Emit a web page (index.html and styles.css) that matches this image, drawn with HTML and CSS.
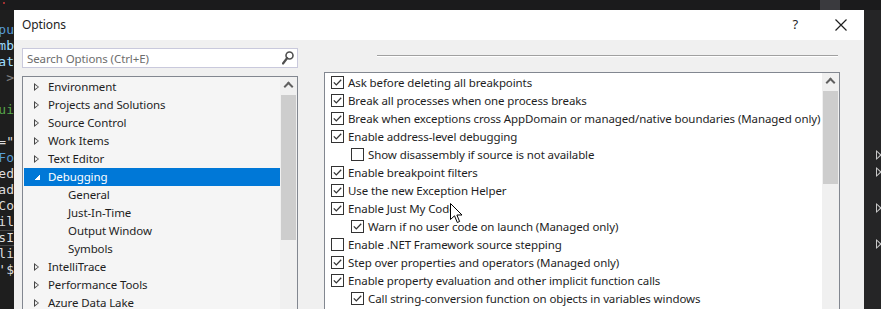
FILE: index.html
```html
<!DOCTYPE html>
<html lang="en">
<head>
    <meta charset="UTF-8">
    <title>Options</title>
    <link rel="stylesheet" href="styles.css">
</head>
<body>
<div class="screen">
    <!-- editor tab strip -->
    <div class="topbar">
        <span class="tab-mark"></span>
        <span class="tab-box"></span>
    </div>

    <div class="main">
        <!-- code editor behind the dialog -->
        <div class="code">
            <div class="ln kw">pu</div>
            <div class="ln id">mb</div>
            <div class="ln id">at</div>
            <div class="ln op">&gt;</div>
            <div class="ln"></div>
            <div class="ln cm">ui</div>
            <div class="ln"></div>
            <div class="ln tx">="</div>
            <div class="ln kw">Fo</div>
            <div class="ln tx">ed</div>
            <div class="ln tx">ad</div>
            <div class="ln tx">Co</div>
            <div class="ln tx">il</div>
            <div class="ln tx cur">sI</div>
            <div class="ln tx">li</div>
            <div class="ln tx">'$</div>
        </div>

        <!-- Options dialog -->
        <div class="dialog">
            <div class="titlebar">
                <span class="title">Options</span>
                <span class="help">?</span>
                <svg class="close" width="12" height="12" viewBox="0 0 12 12">
                    <path d="M0.5 0.5 L11.5 11.5 M11.5 0.5 L0.5 11.5" stroke="#1e1e1e" stroke-width="1.2" fill="none"/>
                </svg>
            </div>

            <div class="dialog-body">
                <div class="nav">
                    <div class="search">
                        <span class="search-text">Search Options (Ctrl+E)</span>
                        <svg class="search-icon" width="12" height="14" viewBox="0 0 12 14">
                            <circle cx="7.5" cy="4.5" r="3.5" stroke="#505050" stroke-width="1.6" fill="none"/>
                            <path d="M5.2 7 L1 12.5" stroke="#505050" stroke-width="2.2" stroke-linecap="round"/>
                        </svg>
                    </div>

                    <div class="tree">
                        <ul class="tree-items">
                            <li class="node"><span class="exp"></span>Environment</li>
                            <li class="node"><span class="exp"></span>Projects and Solutions</li>
                            <li class="node"><span class="exp"></span>Source Control</li>
                            <li class="node"><span class="exp"></span>Work Items</li>
                            <li class="node"><span class="exp"></span>Text Editor</li>
                            <li class="node selected"><span class="exp open"></span>Debugging</li>
                            <li class="leaf">General</li>
                            <li class="leaf">Just-In-Time</li>
                            <li class="leaf">Output Window</li>
                            <li class="leaf">Symbols</li>
                            <li class="node"><span class="exp"></span>IntelliTrace</li>
                            <li class="node"><span class="exp"></span>Performance Tools</li>
                            <li class="node"><span class="exp"></span>Azure Data Lake</li>
                        </ul>
                        <div class="vscroll">
                            <div class="arrow-up"></div>
                            <div class="thumb tree-thumb"></div>
                        </div>
                    </div>
                </div>

                <div class="page">
                    <div class="page-head">
                        <span class="page-title"></span>
                        <div class="rule"></div>
                    </div>

                    <div class="opts">
                        <ul class="opt-list">
                            <li class="opt on">Ask before deleting all breakpoints</li>
                            <li class="opt on">Break all processes when one process breaks</li>
                            <li class="opt on">Break when exceptions cross AppDomain or managed/native boundaries (Managed only)</li>
                            <li class="opt on">Enable address-level debugging</li>
                            <li class="opt sub">Show disassembly if source is not available</li>
                            <li class="opt on">Enable breakpoint filters</li>
                            <li class="opt on">Use the new Exception Helper</li>
                            <li class="opt on">Enable Just My Code</li>
                            <li class="opt on sub">Warn if no user code on launch (Managed only)</li>
                            <li class="opt">Enable .NET Framework source stepping</li>
                            <li class="opt on">Step over properties and operators (Managed only)</li>
                            <li class="opt on">Enable property evaluation and other implicit function calls</li>
                            <li class="opt on sub">Call string-conversion function on objects in variables windows</li>
                        </ul>
                        <div class="vscroll">
                            <div class="arrow-up"></div>
                            <div class="thumb opt-thumb"></div>
                        </div>
                    </div>
                </div>
            </div>
        </div>

        <!-- solution explorer edge -->
        <div class="side">
            <span class="side-arrow a1"></span>
            <span class="side-arrow a2"></span>
            <span class="side-arrow a3"></span>
            <span class="side-arrow a4"></span>
        </div>
    </div>

    <!-- mouse pointer -->
    <svg class="pointer" width="13" height="21" viewBox="0 0 13 21">
        <path d="M0.5 0.5 L0.5 16.5 L4.5 12.8 L7.3 19.5 L9.6 18.5 L6.9 12 L12 12 Z" fill="#ffffff" stroke="#000000" stroke-width="1"/>
    </svg>
</div>
</body>
</html>
```

FILE: styles.css
```css
body {
    margin: 0;
    padding: 0;
    background-color: #1e1e1e;
    font-family: "Noto Sans", "Open Sans", sans-serif;
    font-size: 11.5px;
    letter-spacing: -0.1px;
    color: #1e1e1e;
}

.screen {
    position: relative;
    width: 881px;
    height: 309px;
    overflow: hidden;
}

.topbar {
    height: 10px;
    background-color: #1b1b1c;
    display: flex;
}

.tab-mark {
    width: 2px;
    height: 2px;
    margin: 2px 0 0 3px;
    background-color: #a03030;
}

.tab-box {
    width: 20px;
    height: 10px;
    margin-left: 815px;
    background-color: #3a3a3e;
}

.main {
    display: flex;
    height: 299px;
}

/* ---------- code behind ---------- */

.code {
    width: 14px;
    flex-shrink: 0;
    padding-top: 12px;
    overflow: hidden;
    background-color: #1e1e1e;
    font-family: "DejaVu Sans Mono", monospace;
    font-size: 13px;
    letter-spacing: 0;
}

.ln {
    height: 16px;
    line-height: 16px;
    display: flex;
    justify-content: flex-end;
    white-space: nowrap;
}

.kw { color: #569cd6; }
.id { color: #9cdcfe; }
.op { color: #808080; }
.cm { color: #57a64a; }
.tx { color: #dcdcdc; }

.cur {
    background-color: #1e1e1e;
    border-top: 1px solid #464646;
    border-bottom: 1px solid #464646;
    height: 14px;
    line-height: 14px;
}

/* ---------- dialog ---------- */

.dialog {
    width: 850px;
    flex-shrink: 0;
    background-color: #f0f0f0;
    display: flex;
    flex-direction: column;
    overflow: hidden;
}

.titlebar {
    height: 30px;
    flex-shrink: 0;
    background-color: #ffffff;
    display: flex;
    align-items: center;
    padding-left: 8px;
}

.title {
    flex: 1;
    font-size: 12px;
    padding-bottom: 1px;
}

.help {
    font-size: 13px;
    margin-right: 37px;
    padding-bottom: 2px;
}

.close {
    margin-right: 17px;
    margin-bottom: 1px;
}

.dialog-body {
    display: flex;
    flex-shrink: 0;
    padding: 8px 0 0 8px;
}

.nav {
    width: 276px;
    flex-shrink: 0;
    margin-right: 26px;
}

.search {
    height: 18px;
    border: 1px solid #c9c9dc;
    background-color: #ffffff;
    display: flex;
    align-items: center;
    padding: 0 3px 0 4px;
}

.search-text {
    flex: 1;
    color: #6d6d6d;
}

.tree {
    margin-top: 8px;
    height: 240px;
    border: 1px solid #828790;
    background-color: #f5f5f5;
    display: flex;
}

.tree-items {
    list-style: none;
    margin: 0;
    padding: 1px 0 0 1px;
    flex: 1;
    min-width: 0;
}

.tree-items li {
    height: 18px;
    line-height: 18px;
    white-space: nowrap;
}

.node {
    display: flex;
    align-items: center;
    padding-left: 10px;
}

.exp {
    width: 0;
    height: 0;
    margin-right: 9px;
    border-style: solid;
    border-width: 4.5px 0 4.5px 5px;
    border-color: transparent transparent transparent #444444;
    position: relative;
}

.exp::after {
    content: "";
    position: absolute;
    left: -4px;
    top: -2.5px;
    border-style: solid;
    border-width: 2.5px 0 2.5px 3px;
    border-color: transparent transparent transparent #f5f5f5;
}

.exp.open {
    width: 6px;
    height: 6px;
    border: none;
    margin-right: 8px;
    background: linear-gradient(to bottom right, transparent 50%, #ffffff 50%);
}

.exp.open::after {
    display: none;
}

.selected {
    background-color: #0078d7;
    color: #ffffff;
}

.leaf {
    padding-left: 44px;
}

.vscroll {
    width: 17px;
    flex-shrink: 0;
    background-color: #f0f0f0;
    display: flex;
    flex-direction: column;
    align-items: center;
}

.arrow-up {
    height: 17px;
    width: 15px;
    position: relative;
}

.arrow-up::before {
    content: "";
    position: absolute;
    left: 4px;
    top: 6px;
    width: 7px;
    height: 7px;
    border-left: 2px solid #606060;
    border-top: 2px solid #606060;
    transform: rotate(45deg);
    box-sizing: border-box;
}

.thumb {
    width: 15px;
    background-color: #cdcdcd;
    margin-top: 1px;
}

.tree-thumb {
    height: 145px;
}

.opt-thumb {
    height: 93px;
}

/* ---------- options page ---------- */

.page {
    width: 516px;
    flex-shrink: 0;
}

.page-head {
    display: flex;
    align-items: center;
    height: 16px;
    margin-bottom: 8px;
}

.page-title {
    width: 53px;
}

.rule {
    flex: 1;
    margin-right: 2px;
    height: 1px;
    background-color: #a0a0a0;
    border-bottom: 1px solid #ffffff;
}

.opts {
    height: 240px;
    border: 1px solid #828790;
    background-color: #ffffff;
    display: flex;
}

.opt-list {
    list-style: none;
    margin: 0;
    padding: 0;
    flex: 1;
    min-width: 0;
    overflow: hidden;
}

.opt {
    height: 18px;
    display: flex;
    align-items: center;
    padding-left: 6px;
    white-space: nowrap;
}

.opt::before {
    content: "";
    flex-shrink: 0;
    width: 11px;
    height: 11px;
    margin-right: 4px;
    border: 1px solid #333333;
    background-color: #ffffff;
}

.opt.on::before {
    background-image: url("data:image/svg+xml;utf8,<svg xmlns='http://www.w3.org/2000/svg' width='11' height='11' viewBox='0 0 11 11'><path d='M1.8 5.4 L4.3 7.9 L9.2 2.7' stroke='%23333333' stroke-width='1.3' fill='none'/></svg>");
}

.opt.sub {
    padding-left: 26px;
}

/* ---------- right edge ---------- */

.side {
    flex: 1;
    background-color: #252526;
    position: relative;
}

.side-arrow {
    position: absolute;
    left: 12px;
    width: 0;
    height: 0;
    border-style: solid;
    border-width: 5px 0 5px 6px;
    border-color: transparent transparent transparent #c8c8c8;
}

.side-arrow::after {
    content: "";
    position: absolute;
    left: -5px;
    top: -3px;
    border-style: solid;
    border-width: 3px 0 3px 3.5px;
    border-color: transparent transparent transparent #252526;
}

.a1 { top: 140px; }
.a2 { top: 157px; }
.a3 { top: 193px; }
.a4 { top: 229px; }

.pointer {
    position: absolute;
    left: 450px;
    top: 203px;
}
```
